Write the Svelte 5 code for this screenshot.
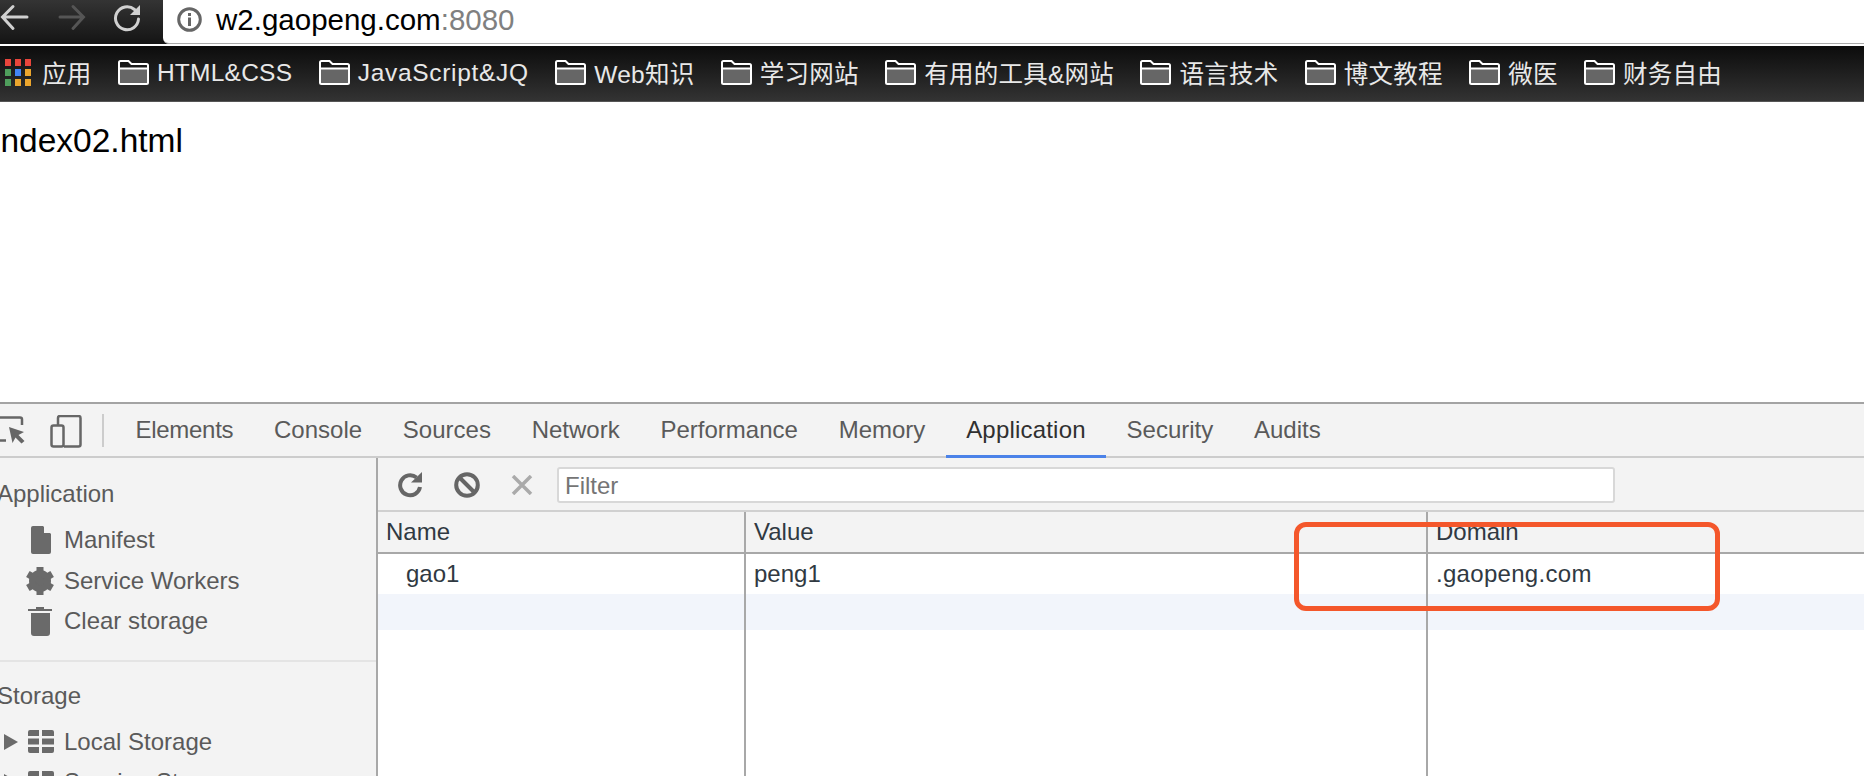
<script>
  const bookmarks = [
    "HTML&CSS",
    "JavaScript&JQ",
    "Web知识",
    "学习网站",
    "有用的工具&网站",
    "语言技术",
    "博文教程",
    "微医",
    "财务自由",
  ];
  const appColors = [
    "#e8453c", "#e8453c", "#e8453c",
    "#4f9e5c", "#4285f4", "#eba52d",
    "#4f9e5c", "#eba52d", "#eba52d",
  ];
  const tabs = ["Elements", "Console", "Sources", "Network", "Performance", "Memory", "Application", "Security", "Audits"];
</script>

<div class="page">
  <header class="toolbar">
    <nav class="nav">
      <svg class="back" width="30" height="36" viewBox="0 0 30 36"><path d="M27 17H3M13 6.500 2.500 17 13 28.500" /></svg>
      <svg class="forward" width="30" height="36" viewBox="0 0 30 36"><path d="M3 17H26M16 6.500 26.500 17 16 28.500" /></svg>
      <svg class="reload" width="30" height="36" viewBox="0 0 30 36">
        <path d="M21.500 9.500A11.500 11.500 0 1 0 25.500 19" />
        <polygon points="17,15 27,15 27,5" />
      </svg>
    </nav>
    <div class="omnibox">
      <svg width="25" height="25" viewBox="0 0 25 25">
        <circle cx="12.500" cy="12.500" r="10.800" fill="none" stroke="#666" stroke-width="3" />
        <rect x="11" y="6" width="3" height="3" fill="#666" />
        <rect x="11" y="10.500" width="3" height="8.500" fill="#666" />
      </svg>
      <span class="url">w2.gaopeng.com<span class="port">:8080</span></span>
    </div>
  </header>

  <div class="bookmarks">
    <div class="bookmark apps">
      <div class="apps-grid">
        {#each appColors as c}
          <i style="background: {c}"></i>
        {/each}
      </div>
      <span>应用</span>
    </div>
    {#each bookmarks as b}
      <div class="bookmark" class:wide={b === "JavaScript&JQ"}>
        <svg width="31" height="25" viewBox="0 0 31 25">
          <path d="M1 9H30V22.500Q30 24 28.500 24H2.500Q1 24 1 22.500Z" fill="#666" />
          <path d="M1 22.500V2.500Q1 1 2.500 1H10.500L13.500 4H28.500Q30 4 30 5.500V22.500Q30 24 28.500 24H2.500Q1 24 1 22.500ZM1 8.500H30" fill="none" stroke="#fff" stroke-width="2" />
        </svg>
        <span>{b}</span>
      </div>
    {/each}
  </div>

  <main class="content">index02.html</main>

  <section class="devtools">
    <div class="tabbar">
      <svg class="inspect" width="26" height="30" viewBox="0 0 26 30">
        <path d="M0 1.500H20Q22 1.500 22 3.500V9M0 24.500H6" fill="none" stroke="#666" stroke-width="2.500" />
        <polygon points="9,11 24,16 18.500,19 24.500,25 21.500,27.500 15.500,21.500 12.500,27" fill="#666" />
      </svg>
      <svg class="device" width="32" height="33" viewBox="0 0 32 33">
        <path d="M8 10V3Q8 1 10 1H28.500Q30.500 1 30.500 3V29.500Q30.500 31.500 28.500 31.500H14" fill="none" stroke="#666" stroke-width="2.500" />
        <rect x="1.500" y="10.500" width="12" height="21" rx="2" fill="none" stroke="#666" stroke-width="2.500" />
      </svg>
      <div class="sep"></div>
      <div class="tabs">
        {#each tabs as t}
          <div class="tab" class:active={t === "Application"}>{t}</div>
        {/each}
      </div>
    </div>

    <div class="panes">
      <aside class="sidebar">
        <h3>Application</h3>
        <div class="item">
          <svg width="28" height="30" viewBox="0 0 28 30">
            <path d="M5 3Q5 1 7 1H17L25 9V27Q25 29 23 29H7Q5 29 5 27Z" fill="#6a6a6a" />
            <path d="M18 1 25 8H18Z" fill="#f3f3f3" />
          </svg>
          <span>Manifest</span>
        </div>
        <div class="item">
          <svg width="28" height="30" viewBox="-14 -15 28 30">
            <g fill="#6a6a6a">
              <rect x="-3.500" y="-14" width="7" height="28" />
              <rect x="-3.500" y="-14" width="7" height="28" transform="rotate(60)" />
              <rect x="-3.500" y="-14" width="7" height="28" transform="rotate(120)" />
            </g>
            <circle r="8" fill="none" stroke="#6a6a6a" stroke-width="6" />
          </svg>
          <span>Service Workers</span>
        </div>
        <div class="item">
          <svg width="28" height="30" viewBox="0 0 28 30">
            <path d="M2 3H26V5H2ZM10 1H18V3H10ZM5 7H24V27Q24 30 21 30H8Q5 30 5 27Z" fill="#6a6a6a" />
          </svg>
          <span>Clear storage</span>
        </div>
        <div class="divider"></div>
        <h3>Storage</h3>
        <div class="item tree">
          <b class="arrow"></b>
          <svg width="26" height="23" viewBox="0 0 26 23">
            <path d="M0 2Q0 0 2 0H11V6H0ZM14 0H24Q26 0 26 2V6H14ZM0 8.500H11V14.500H0ZM14 8.500H26V14.500H14ZM0 17H11V23H2Q0 23 0 21ZM14 17H26V21Q26 23 24 23H14Z" fill="#6a6a6a" />
          </svg>
          <span>Local Storage</span>
        </div>
        <div class="item tree">
          <b class="arrow"></b>
          <svg width="26" height="23" viewBox="0 0 26 23">
            <path d="M0 2Q0 0 2 0H11V6H0ZM14 0H24Q26 0 26 2V6H14ZM0 8.500H11V14.500H0ZM14 8.500H26V14.500H14ZM0 17H11V23H2Q0 23 0 21ZM14 17H26V21Q26 23 24 23H14Z" fill="#6a6a6a" />
          </svg>
          <span>Session Storage</span>
        </div>
      </aside>

      <div class="main-pane">
        <div class="filterbar">
          <svg class="tool-reload" width="26" height="26" viewBox="0 0 26 26">
            <path d="M19.500 5.500A10 10 0 1 0 23 15" fill="none" stroke="#666" stroke-width="4" />
            <polygon points="14,10.500 25,10.500 25,0" fill="#666" />
          </svg>
          <svg class="tool-block" width="26" height="26" viewBox="0 0 26 26">
            <circle cx="13" cy="13" r="10.800" fill="none" stroke="#666" stroke-width="4" />
            <path d="M5.500 5.500 20.500 20.500" stroke="#666" stroke-width="4" />
          </svg>
          <svg class="tool-close" width="22" height="20" viewBox="0 0 22 20">
            <path d="M2 1 20 19M20 1 2 19" stroke="#aaa" stroke-width="3.500" />
          </svg>
          <div class="filter">Filter</div>
        </div>

        <div class="table">
          <div class="row head">
            <div>Name</div>
            <div>Value</div>
            <div>Domain</div>
          </div>
          <div class="row first">
            <div class="name">gao1</div>
            <div>peng1</div>
            <div class="domain">.gaopeng.com</div>
          </div>
          <div class="row tint"><div></div><div></div><div></div></div>
          <div class="row fill"><div></div><div></div><div></div></div>
        </div>
      </div>
    </div>
  </section>

  <div class="mark"></div>
</div>

<style>
  :global(body) {
    margin: 0;
    background: #fff;
  }

  .page {
    position: relative;
    width: 1864px;
    height: 776px;
    overflow: hidden;
    display: flex;
    flex-direction: column;
    font-family: "Liberation Sans", "Noto Sans CJK SC", sans-serif;
  }

  .toolbar {
    height: 44px;
    display: flex;
    background: linear-gradient(#343434, #141414);
    flex: none;
  }

  .nav {
    width: 163px;
    display: flex;
    flex: none;
  }

  .nav svg {
    fill: none;
    stroke-width: 3;
    stroke-linecap: round;
  }

  .back {
    stroke: #d0d0d0;
    margin-right: 27px;
  }

  .forward {
    stroke: #555;
    margin-right: 26px;
  }

  .reload {
    stroke: #d0d0d0;
  }

  .reload polygon {
    fill: #d0d0d0;
    stroke: none;
  }

  .omnibox {
    flex: 1;
    background: #fff;
    border-bottom: 1px solid #aaa;
    border-bottom-left-radius: 6px;
    display: flex;
    align-items: flex-start;
    padding: 7px 0 0 14px;
    box-sizing: border-box;
  }

  .url {
    margin: -4px 0 0 14px;
    font-size: 29.500px;
    line-height: 34px;
    color: #000;
  }

  .port {
    color: #808080;
  }

  .bookmarks {
    height: 56px;
    margin-top: 2px;
    flex: none;
    display: flex;
    align-items: center;
    gap: 26.400px;
    padding: 0 0 2px 5px;
    background: linear-gradient(#0c0c0c, #333);
    border-bottom: 1px solid #555;
    box-sizing: border-box;
    font-size: 24.500px;
    letter-spacing: 0.250px;
    color: #e8e8e8;
  }

  .bookmark {
    display: flex;
    align-items: center;
    gap: 8px;
    white-space: nowrap;
  }

  .bookmark.wide {
    letter-spacing: 0.700px;
  }

  .apps {
    gap: 11px;
  }

  .apps-grid {
    display: grid;
    grid-template-columns: repeat(3, 6px);
    grid-auto-rows: 7px;
    gap: 3px 4px;
  }

  .content {
    height: 300px;
    flex: none;
    box-sizing: border-box;
    padding: 19px 0 0 0;
    margin-left: -7px;
    font-size: 33.500px;
    line-height: 40px;
    color: #000;
  }

  .devtools {
    flex: 1;
    display: flex;
    flex-direction: column;
    border-top: 2px solid #a3a3a3;
    background: #f3f3f3;
    min-height: 0;
  }

  .tabbar {
    height: 54px;
    flex: none;
    box-sizing: border-box;
    border-bottom: 2px solid #ccc;
    display: flex;
    align-items: center;
  }

  .inspect {
    margin-right: 24px;
    margin-top: 2px;
  }

  .device {
    margin-top: 3px;
  }

  .sep {
    width: 2px;
    height: 33px;
    background: #ccc;
    margin: 0 11.200px 0 20px;
  }

  .tabs {
    display: flex;
    height: 100%;
    font-size: 24px;
    color: #5a5a5a;
  }

  .tab {
    padding: 0 20.400px;
    line-height: 51px;
    height: 54px;
    box-sizing: border-box;
    white-space: nowrap;
  }

  .tab:first-child {
    letter-spacing: -0.300px;
  }

  .tab.active {
    color: #303030;
    letter-spacing: 0.200px;
    border-bottom: 3px solid #4b82e8;
  }

  .panes {
    flex: 1;
    display: flex;
    min-height: 0;
  }

  .sidebar {
    width: 378px;
    flex: none;
    box-sizing: border-box;
    border-right: 2px solid #a8a8a8;
    font-size: 24px;
    color: #5a5a5a;
    padding-top: 16px;
    overflow: hidden;
  }

  h3 {
    font: inherit;
    margin: 0 0 0 -3px;
    height: 40px;
    line-height: 40px;
  }

  .item {
    display: flex;
    align-items: center;
    height: 40.500px;
    padding-left: 26px;
    gap: 10px;
  }

  .item svg {
    flex: none;
  }

  .divider {
    height: 2px;
    background: #e4e4e4;
    margin: 18px 0 14px;
  }

  .tree {
    padding-left: 4px;
    gap: 9.500px;
  }

  .tree svg {
    margin-right: 1px;
  }

  .arrow {
    width: 0;
    height: 0;
    border-style: solid;
    border-width: 8px 0 8px 14px;
    border-color: transparent transparent transparent #6a6a6a;
  }

  .sidebar h3 + .item {
    margin-top: 6px;
  }

  .divider + h3 + .tree {
    margin-top: 6px;
  }

  .main-pane {
    flex: 1;
    display: flex;
    flex-direction: column;
    min-width: 0;
  }

  .filterbar {
    height: 54px;
    flex: none;
    box-sizing: border-box;
    border-bottom: 2px solid #d0d0d0;
    display: flex;
    align-items: center;
    padding: 2px 0 0 19px;
  }

  .tool-reload {
    margin-right: 31px;
  }

  .tool-block {
    margin-right: 31px;
  }

  .tool-close {
    margin-right: 24px;
  }

  .filter {
    width: 1058px;
    height: 36px;
    box-sizing: border-box;
    background: #fff;
    border: 2px solid #d8d8d8;
    border-radius: 3px;
    padding-left: 6px;
    font-size: 24px;
    line-height: 33px;
    color: #757575;
  }

  .table {
    flex: 1;
    display: flex;
    flex-direction: column;
    background: #fff;
    font-size: 24px;
    color: #303942;
    min-height: 0;
  }

  .row {
    display: grid;
    grid-template-columns: 366px 682px 1fr;
    flex: none;
  }

  .row > div + div {
    border-left: 2px solid #a8a8a8;
  }

  .row > div {
    padding-left: 8px;
    box-sizing: border-box;
  }

  .head {
    height: 42px;
    background: #f3f3f3;
    border-bottom: 2px solid #a8a8a8;
    line-height: 40px;
    box-sizing: border-box;
  }

  .first {
    height: 40px;
    line-height: 40px;
  }

  .first .name {
    padding-left: 28px;
  }

  .first .domain {
    letter-spacing: 0.300px;
  }

  .tint {
    height: 36px;
    background: #f2f5fb;
  }

  .fill {
    flex: 1;
  }

  .mark {
    position: absolute;
    left: 1294px;
    top: 522px;
    width: 426px;
    height: 89px;
    box-sizing: border-box;
    border: 5px solid #f4572b;
    border-radius: 12px;
  }
</style>
